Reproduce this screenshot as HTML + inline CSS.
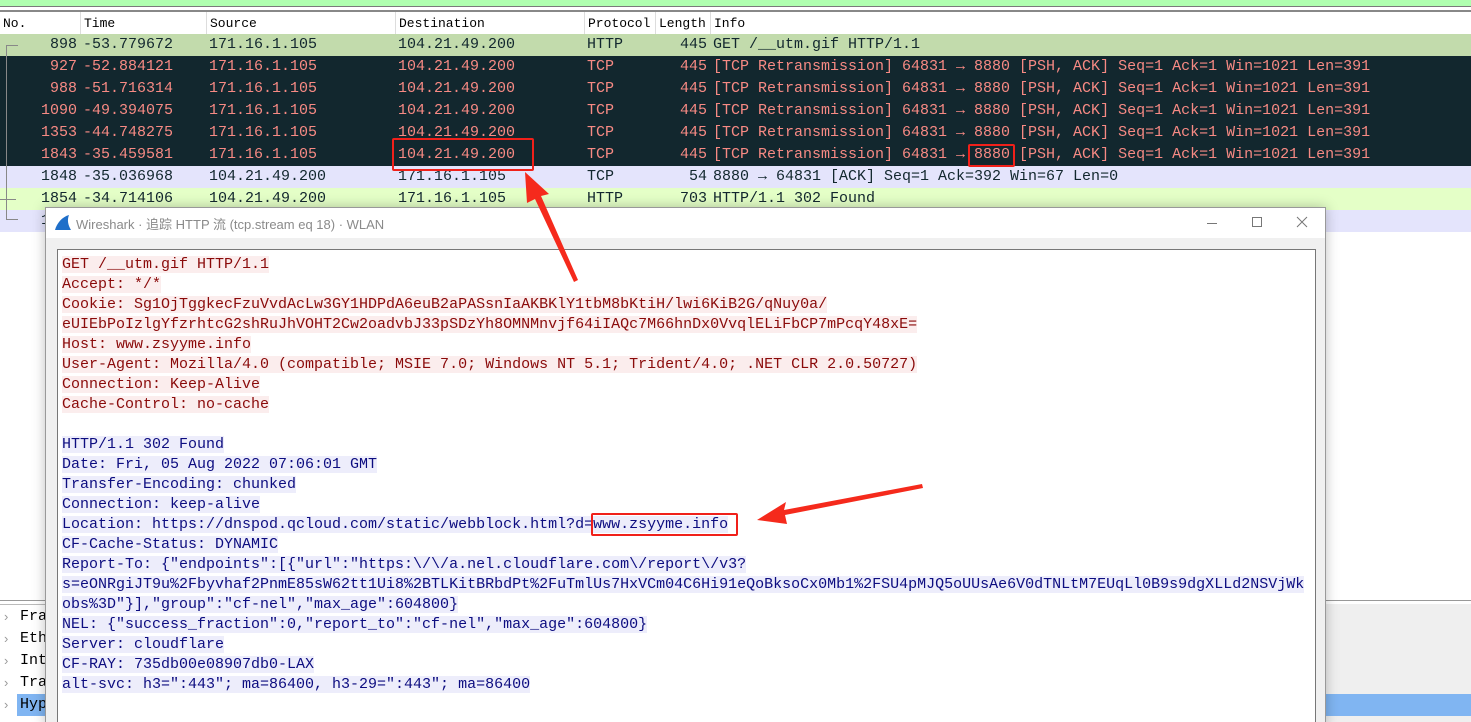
<!DOCTYPE html>
<html><head><meta charset="utf-8"><style>
*{margin:0;padding:0;box-sizing:border-box}
html,body{width:1471px;height:722px;overflow:hidden}
body{background:#fff;position:relative;font-family:"Liberation Mono",monospace;font-size:15px}
.abs{position:absolute}
.row{position:absolute;left:0;width:1471px;height:22px;line-height:22px;white-space:pre}
.row span{position:absolute;top:0}
.dark{background:#12272e;color:#f78a84}
.hdr{position:absolute;top:10px;left:0;width:1471px;height:24px;line-height:24px;color:#000;background:#fff;border-top:2px solid #888}
.hdr span{position:absolute;top:0;height:24px;border-left:1px solid #ddd;padding-left:3px;font-family:"Liberation Mono",monospace;font-size:13px}
.t{position:absolute;left:62px;line-height:20px}
.t div{height:20px;white-space:nowrap}
.t span{white-space:pre}
.r span{background:#fbeded;color:#8a0a0a}
.b span{background:#ededfb;color:#0d0d80}
</style></head><body>
<div class="abs" style="left:0;top:0;width:1471px;height:7px;background:#afffaf;border-bottom:1px solid #7a7a7a"></div>
<div class="hdr"><span style="left:0;border:none">No.</span><span style="left:80px">Time</span><span style="left:206px">Source</span><span style="left:395px">Destination</span><span style="left:584px">Protocol</span><span style="left:655px">Length</span><span style="left:710px">Info</span></div>

<div class="row" style="top:34px;background:#c2dbac;color:#12272e"><span style="left:50px">898</span><span style="left:83px">-53.779672</span><span style="left:209px">171.16.1.105</span><span style="left:398px">104.21.49.200</span><span style="left:587px">HTTP</span><span style="left:680px">445</span><span style="left:713px">GET /__utm.gif HTTP/1.1</span></div>
<div class="row dark" style="top:56px"><span style="left:50px">927</span><span style="left:83px">-52.884121</span><span style="left:209px">171.16.1.105</span><span style="left:398px">104.21.49.200</span><span style="left:587px">TCP</span><span style="left:680px">445</span><span style="left:713px">[TCP Retransmission] 64831 → 8880 [PSH, ACK] Seq=1 Ack=1 Win=1021 Len=391</span></div>
<div class="row dark" style="top:78px"><span style="left:50px">988</span><span style="left:83px">-51.716314</span><span style="left:209px">171.16.1.105</span><span style="left:398px">104.21.49.200</span><span style="left:587px">TCP</span><span style="left:680px">445</span><span style="left:713px">[TCP Retransmission] 64831 → 8880 [PSH, ACK] Seq=1 Ack=1 Win=1021 Len=391</span></div>
<div class="row dark" style="top:100px"><span style="left:41px">1090</span><span style="left:83px">-49.394075</span><span style="left:209px">171.16.1.105</span><span style="left:398px">104.21.49.200</span><span style="left:587px">TCP</span><span style="left:680px">445</span><span style="left:713px">[TCP Retransmission] 64831 → 8880 [PSH, ACK] Seq=1 Ack=1 Win=1021 Len=391</span></div>
<div class="row dark" style="top:122px"><span style="left:41px">1353</span><span style="left:83px">-44.748275</span><span style="left:209px">171.16.1.105</span><span style="left:398px">104.21.49.200</span><span style="left:587px">TCP</span><span style="left:680px">445</span><span style="left:713px">[TCP Retransmission] 64831 → 8880 [PSH, ACK] Seq=1 Ack=1 Win=1021 Len=391</span></div>
<div class="row dark" style="top:144px"><span style="left:41px">1843</span><span style="left:83px">-35.459581</span><span style="left:209px">171.16.1.105</span><span style="left:398px">104.21.49.200</span><span style="left:587px">TCP</span><span style="left:680px">445</span><span style="left:713px">[TCP Retransmission] 64831 → 8880 [PSH, ACK] Seq=1 Ack=1 Win=1021 Len=391</span></div>
<div class="row" style="top:166px;background:#e4e4fc;color:#12272e"><span style="left:41px">1848</span><span style="left:83px">-35.036968</span><span style="left:209px">104.21.49.200</span><span style="left:398px">171.16.1.105</span><span style="left:587px">TCP</span><span style="left:689px">54</span><span style="left:713px">8880 → 64831 [ACK] Seq=1 Ack=392 Win=67 Len=0</span></div>
<div class="row" style="top:188px;background:#e4ffc7;color:#12272e"><span style="left:41px">1854</span><span style="left:83px">-34.714106</span><span style="left:209px">104.21.49.200</span><span style="left:398px">171.16.1.105</span><span style="left:587px">HTTP</span><span style="left:680px">703</span><span style="left:713px">HTTP/1.1 302 Found</span></div>
<div class="row" style="top:210px;background:#e4e4fc;color:#12272e"><span style="left:41px">1</span></div>
<div class="abs" style="left:6px;top:45px;width:1px;height:175px;background:#888"></div>
<div class="abs" style="left:6px;top:45px;width:12px;height:1px;background:#888"></div>
<div class="abs" style="left:6px;top:219px;width:12px;height:1px;background:#888"></div>
<div class="abs" style="left:0;top:199px;width:16px;height:1px;background:#888"></div>

<div class="abs" style="left:0;top:600px;width:1471px;height:1px;background:#999"></div>
<div class="abs" style="left:0;top:604px;width:1471px;height:1px;background:#bbb"></div>
<div class="abs" style="left:1326px;top:604px;width:145px;height:118px;background:#efefef"></div>
<div class="abs" style="left:1326px;top:694px;width:145px;height:22px;background:#80b5f2"></div>
<div class="abs" style="left:17px;top:694px;width:40px;height:22px;background:#80b5f2"></div>
<div class="abs" style="left:4px;top:606px;line-height:22px;color:#999;font-family:'Liberation Sans',sans-serif;font-size:13px">›<br>›<br>›<br>›<br>›</div>
<div class="abs" style="left:20px;top:606px;line-height:22px;color:#000;white-space:pre">Fra<br>Eth<br>Int<br>Tra<br>Hyp</div>

<div class="abs" style="left:45px;top:207px;width:1281px;height:520px;background:#f0f0f0;border:1px solid #999;box-shadow:0 0 12px rgba(0,0,0,.25)">
  <div class="abs" style="left:0;top:0;width:1279px;height:30px;background:#fff"></div>
  <svg class="abs" style="left:8px;top:7px" width="18" height="16"><path d="M1 15 C3 8 8 2 15 0 C13 5 14 10 17 15 Z" fill="#1f6fc9"/></svg>
  <div class="abs" style="left:30px;top:6px;font-family:'Liberation Sans','Noto Sans CJK SC',sans-serif;font-size:13px;color:#8a8a8a">Wireshark · 追踪 HTTP 流 (tcp.stream eq 18) · WLAN</div>
  <div class="abs" style="left:1161px;top:15px;width:10px;height:1px;background:#777"></div>
  <div class="abs" style="left:1206px;top:9px;width:10px;height:10px;border:1px solid #777"></div>
  <svg class="abs" style="left:1250px;top:8px" width="12" height="12"><path d="M1 1L11 11M11 1L1 11" stroke="#777" stroke-width="1"/></svg>
  <div class="abs" style="left:11px;top:41px;width:1259px;height:480px;background:#fff;border:1px solid #777"></div>
</div>

<div class="t" style="top:255px"><div class="r"><span>GET /__utm.gif HTTP/1.1</span></div><div class="r"><span>Accept: */*</span></div><div class="r"><span>Cookie: Sg1OjTggkecFzuVvdAcLw3GY1HDPdA6euB2aPASsnIaAKBKlY1tbM8bKtiH/lwi6KiB2G/qNuy0a/</span></div><div class="r"><span>eUIEbPoIzlgYfzrhtcG2shRuJhVOHT2Cw2oadvbJ33pSDzYh8OMNMnvjf64iIAQc7M66hnDx0VvqlELiFbCP7mPcqY48xE=</span></div><div class="r"><span>Host: www.zsyyme.info</span></div><div class="r"><span>User-Agent: Mozilla/4.0 (compatible; MSIE 7.0; Windows NT 5.1; Trident/4.0; .NET CLR 2.0.50727)</span></div><div class="r"><span>Connection: Keep-Alive</span></div><div class="r"><span>Cache-Control: no-cache</span></div><div></div><div class="b"><span>HTTP/1.1 302 Found</span></div><div class="b"><span>Date: Fri, 05 Aug 2022 07:06:01 GMT</span></div><div class="b"><span>Transfer-Encoding: chunked</span></div><div class="b"><span>Connection: keep-alive</span></div><div class="b"><span>Location: https://dnspod.qcloud.com/static/webblock.html?d=www.zsyyme.info</span></div><div class="b"><span>CF-Cache-Status: DYNAMIC</span></div><div class="b"><span>Report-To: {"endpoints":[{"url":"https:\/\/a.nel.cloudflare.com\/report\/v3?</span></div><div class="b"><span>s=eONRgiJT9u%2Fbyvhaf2PnmE85sW62tt1Ui8%2BTLKitBRbdPt%2FuTmlUs7HxVCm04C6Hi91eQoBksoCx0Mb1%2FSU4pMJQ5oUUsAe6V0dTNLtM7EUqLl0B9s9dgXLLd2NSVjWk</span></div><div class="b"><span>obs%3D"}],"group":"cf-nel","max_age":604800}</span></div><div class="b"><span>NEL: {"success_fraction":0,"report_to":"cf-nel","max_age":604800}</span></div><div class="b"><span>Server: cloudflare</span></div><div class="b"><span>CF-RAY: 735db00e08907db0-LAX</span></div><div class="b"><span>alt-svc: h3=":443"; ma=86400, h3-29=":443"; ma=86400</span></div></div>

<div class="abs" style="left:392px;top:138px;width:142px;height:33px;border:2px solid #f0201a;border-radius:2px"></div>
<div class="abs" style="left:968px;top:144px;width:47px;height:23px;border:2px solid #f0201a;border-radius:2px"></div>
<div class="abs" style="left:591px;top:513px;width:147px;height:23px;border:2px solid #f0201a;border-radius:2px"></div>
<svg class="abs" style="left:0;top:0" width="1471" height="722">
<polygon points="525,172 549,194 541,196 578,280 574,282 535,199 527,203" fill="#f52a1c"/>
<polygon points="757,520 786,502 784,510 922,484 923,488 785,515 787,524" fill="#f52a1c"/>
</svg>
</body></html>
